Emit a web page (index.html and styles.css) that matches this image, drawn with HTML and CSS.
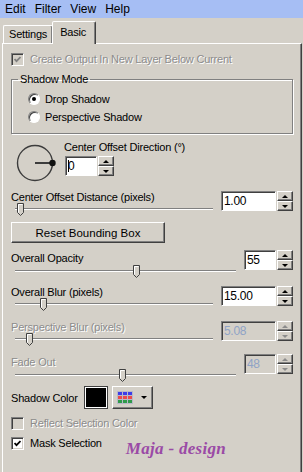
FILE: index.html
```html
<!DOCTYPE html>
<html lang="en">
  <head>
    <meta charset="UTF-8" />
    <meta name="viewport" content="width=device-width, initial-scale=1.0" />
    <link rel="stylesheet" href="styles.css">
    <title>Drop Shadow</title>
  </head>
  <body>
    <div class="menubar">
      <span>Edit</span><span>Filter</span><span>View</span><span>Help</span>
    </div>

    <div class="tabs">
      <div class="tab">Settings</div>
      <div class="tab active">Basic</div>
    </div>

    <div class="panel">
      <div class="check dim">
        <span class="box off-state"><svg width="7" height="7" viewBox="0 0 7 7"><polyline points="0.5,3 2.5,5.2 6.5,1" fill="none" stroke="#808080" stroke-width="1.8"/></svg></span>
        Create Output In New Layer Below Current
      </div>

      <fieldset class="group">
        <legend>Shadow Mode</legend>
        <div class="radio"><span class="dot on"></span>Drop Shadow</div>
        <div class="radio"><span class="dot"></span>Perspective Shadow</div>
      </fieldset>

      <div class="direction">
        <svg class="dial" width="48" height="44" viewBox="0 0 48 44">
          <circle cx="24" cy="22" r="17.5" fill="none" stroke="#3c3c3c" stroke-width="1.4"/>
          <line x1="24" y1="22" x2="41" y2="22" stroke="#3c3c3c" stroke-width="2"/>
          <circle cx="41.5" cy="22" r="3.2" fill="#111"/>
        </svg>
        <div class="dir-fields">
          <div class="label">Center Offset Direction (°)</div>
          <div class="spin narrow">
            <div class="field"><span class="caret"></span>0</div>
            <div class="arrows"><span class="up"></span><span class="down"></span></div>
          </div>
        </div>
      </div>

      <!-- sliders -->
      <div class="slider-block first">
        <div class="label">Center Offset Distance (pixels)</div>
        <div class="spin">
          <div class="field">1.00</div>
          <div class="arrows"><span class="up"></span><span class="down"></span></div>
        </div>
        <div class="slider">
          <div class="track"></div>
          <svg class="thumb" style="left: 2px" width="7" height="13" viewBox="0 0 7 13"><path d="M0.5 9.5V0.5H6.5V9.5L3.5 12.5Z" fill="#d4d0c8" stroke="#404040"/><path d="M1.5 9.5V1.5H5.5" fill="none" stroke="#fff"/></svg>
        </div>
      </div>

      <button class="btn reset">Reset Bounding Box</button>

      <div class="slider-block int">
        <div class="label">Overall Opacity</div>
        <div class="spin narrow">
          <div class="field">55</div>
          <div class="arrows"><span class="up"></span><span class="down"></span></div>
        </div>
        <div class="slider">
          <div class="track"></div>
          <svg class="thumb" style="left: 118px" width="7" height="13" viewBox="0 0 7 13"><path d="M0.5 9.5V0.5H6.5V9.5L3.5 12.5Z" fill="#d4d0c8" stroke="#404040"/><path d="M1.5 9.5V1.5H5.5" fill="none" stroke="#fff"/></svg>
        </div>
      </div>

      <div class="slider-block">
        <div class="label">Overall Blur (pixels)</div>
        <div class="spin">
          <div class="field">15.00</div>
          <div class="arrows"><span class="up"></span><span class="down"></span></div>
        </div>
        <div class="slider">
          <div class="track"></div>
          <svg class="thumb" style="left: 25px" width="7" height="13" viewBox="0 0 7 13"><path d="M0.5 9.5V0.5H6.5V9.5L3.5 12.5Z" fill="#d4d0c8" stroke="#404040"/><path d="M1.5 9.5V1.5H5.5" fill="none" stroke="#fff"/></svg>
        </div>
      </div>

      <div class="slider-block off persp">
        <div class="label dim">Perspective Blur (pixels)</div>
        <div class="spin">
          <div class="field">5.08</div>
          <div class="arrows"><span class="up"></span><span class="down"></span></div>
        </div>
        <div class="slider">
          <div class="track"></div>
          <svg class="thumb" style="left: 11px" width="7" height="13" viewBox="0 0 7 13"><path d="M0.5 9.5V0.5H6.5V9.5L3.5 12.5Z" fill="#d4d0c8" stroke="#404040"/><path d="M1.5 9.5V1.5H5.5" fill="none" stroke="#fff"/></svg>
        </div>
      </div>

      <div class="slider-block int off">
        <div class="label dim">Fade Out</div>
        <div class="spin narrow">
          <div class="field">48</div>
          <div class="arrows"><span class="up"></span><span class="down"></span></div>
        </div>
        <div class="slider">
          <div class="track"></div>
          <svg class="thumb" style="left: 104px" width="7" height="13" viewBox="0 0 7 13"><path d="M0.5 9.5V0.5H6.5V9.5L3.5 12.5Z" fill="#d4d0c8" stroke="#404040"/><path d="M1.5 9.5V1.5H5.5" fill="none" stroke="#fff"/></svg>
        </div>
      </div>

      <div class="color-row">
        <span>Shadow Color</span>
        <span class="swatch"></span>
        <button class="btn palette">
          <svg width="16" height="13" viewBox="0 0 16 13">
            <rect x="0" y="0" width="16" height="13" fill="#b8b8c8"/>
            <rect x="1" y="1" width="4" height="3" fill="#3d3de8"/>
            <rect x="6" y="1" width="4" height="3" fill="#3d3de8"/>
            <rect x="11" y="1" width="4" height="3" fill="#3d3de8"/>
            <rect x="1" y="5" width="4" height="3" fill="#ec4b4b"/>
            <rect x="6" y="5" width="4" height="3" fill="#ec4b4b"/>
            <rect x="11" y="5" width="4" height="3" fill="#ec4b4b"/>
            <rect x="1" y="9" width="4" height="3" fill="#2f9a4a"/>
            <rect x="6" y="9" width="4" height="3" fill="#2f9a4a"/>
            <rect x="11" y="9" width="4" height="3" fill="#2f9a4a"/>
          </svg>
          <span class="drop"></span>
        </button>
      </div>

      <div class="check dim reflect">
        <span class="box off-state"></span>
        Reflect Selection Color
      </div>

      <div class="check mask">
        <span class="box"><svg width="7" height="7" viewBox="0 0 7 7"><polyline points="0.5,3 2.5,5.2 6.5,1" fill="none" stroke="#000" stroke-width="1.8"/></svg></span>
        Mask Selection
        <span class="sign">Maja - design</span>
      </div>
    </div>
  </body>
</html>
```

FILE: styles.css
```css
body {
  margin: 0;
  background: #d4d0c8;
  font-family: 'Liberation Sans', Arial, sans-serif;
  font-size: 11px;
  letter-spacing: -0.2px;
  color: #000;
  overflow: hidden;
}

.menubar {
  height: 18px;
  background: #a6bef4;
  display: flex;
  align-items: center;
  gap: 9px;
  padding-left: 5px;
  font-size: 12px;
  letter-spacing: 0;
}

.tabs {
  display: flex;
  align-items: flex-end;
  height: 25px;
  padding-left: 3px;
}
.tab {
  height: 17px;
  line-height: 17px;
  padding: 0 5px;
  border: 1px solid;
  border-bottom: 0;
  border-color: #fff #404040 transparent #fff;
  border-radius: 2px 2px 0 0;
  box-shadow: inset -1px 0 #808080;
}
.tab.active {
  height: 22px;
  line-height: 20px;
  margin-left: -1px;
  margin-bottom: -1px;
  padding: 0 9px 0 7px;
  position: relative;
  z-index: 1;
  background: #d4d0c8;
}

.panel {
  margin: 0 1px 0 2px;
  border-top: 1px solid #fff;
  border-left: 1px solid #fff;
  border-right: 1px solid #404040;
  box-shadow: inset -1px 0 #808080;
  padding: 9px 8px 0 8px;
  height: calc(100vh - 43px);
  box-sizing: border-box;
}

.label {
  line-height: 13px;
  height: 13px;
  white-space: nowrap;
}
.dim {
  color: #8c8c8c;
  text-shadow: 1px 1px 0 #fff;
}

/* checkboxes */
.check {
  display: flex;
  align-items: center;
  gap: 6px;
  height: 13px;
  line-height: 13px;
}
.box {
  width: 13px;
  height: 13px;
  box-sizing: border-box;
  border: 1px solid;
  border-color: #808080 #fff #fff #808080;
  box-shadow: inset 1px 1px #404040, inset -1px -1px #d4d0c8;
  background: #fff;
  display: flex;
  align-items: center;
  justify-content: center;
  flex-shrink: 0;
}
.box.off-state {
  background: #d4d0c8;
}
.reflect {
  margin-top: 8px;
}
.mask {
  margin-top: 7px;
}
.sign {
  margin-left: 18px;
  margin-top: 9px;
  font-family: 'Liberation Serif', serif;
  font-style: italic;
  font-weight: bold;
  font-size: 17px;
  letter-spacing: 0.3px;
  color: #9a4aa6;
}

/* shadow mode group */
.group {
  margin: 7px 0 0 0;
  padding: 7px 0 10px 6px;
  border: 1px solid #808080;
  box-shadow: inset 1px 1px #fff, 1px 1px #fff;
}
.group legend {
  padding: 0 2px;
  line-height: 13px;
}
.radio {
  display: flex;
  align-items: center;
  gap: 5px;
  height: 12px;
  margin-left: 10px;
}
.radio + .radio {
  margin-top: 6px;
}
.dot {
  width: 12px;
  height: 12px;
  box-sizing: border-box;
  border-radius: 50%;
  border: 1px solid;
  border-color: #808080 #fff #fff #808080;
  box-shadow: inset 1px 1px #404040;
  background: #fff;
  display: flex;
  align-items: center;
  justify-content: center;
}
.dot.on::after {
  content: '';
  width: 4px;
  height: 4px;
  border-radius: 50%;
  background: #000;
}

/* direction */
.direction {
  display: flex;
  margin-top: 7px;
  height: 44px;
}
.dir-fields {
  margin-left: 5px;
}
.dir-fields .spin {
  margin: 2px 0 0 1px;
}

/* spin boxes */
.spin {
  display: flex;
  gap: 1px;
  height: 20px;
}
.field {
  width: 55px;
  box-sizing: border-box;
  border: 1px solid;
  border-color: #808080 #fff #fff #808080;
  box-shadow: inset 1px 1px #404040;
  background: #fff;
  padding: 2px 0 0 2px;
  line-height: 15px;
  font-size: 12px;
  letter-spacing: -0.3px;
}
.spin.narrow .field {
  width: 32px;
}
.caret {
  display: inline-block;
  width: 1px;
  height: 12px;
  background: #000;
  vertical-align: -2px;
  margin-right: -1px;
}
.arrows {
  display: flex;
  flex-direction: column;
  width: 16px;
}
.arrows span {
  flex: 1;
  border: 1px solid;
  border-color: #fff #404040 #404040 #fff;
  box-shadow: inset -1px -1px #808080;
  display: flex;
  align-items: center;
  justify-content: center;
}
.arrows .up::after,
.arrows .down::after {
  content: '';
  border: 3px solid transparent;
}
.arrows .up::after {
  border-top-width: 0;
  border-bottom-color: #000;
}
.arrows .down::after {
  border-bottom-width: 0;
  border-top-color: #000;
}
.off .field {
  background: #d4d0c8;
  color: #8fa3c6;
}
.off .arrows .up::after {
  border-bottom-color: #8c8c8c;
}
.off .arrows .down::after {
  border-top-color: #8c8c8c;
}

/* slider rows */
.slider-block {
  display: grid;
  grid-template-columns: 1fr auto;
  column-gap: 4px;
  margin-top: 7px;
}
.slider-block.first {
  margin-top: 6px;
}
.slider-block.persp {
  margin-top: 9px;
}
.slider-block .label {
  grid-column: 1;
  grid-row: 1;
}
.slider-block .spin {
  grid-column: 2;
  grid-row: 1 / span 2;
}
.slider {
  grid-column: 1;
  grid-row: 2;
  position: relative;
  height: 14px;
  margin: -1px 4px 0 4px;
  padding-top: 5px;
  box-sizing: border-box;
}
.slider-block.int .label {
  margin-top: 2px;
}
.slider-block.int .slider {
  margin-top: 0;
}
.track {
  border-top: 1px solid #808080;
  border-bottom: 1px solid #fff;
}
.thumb {
  position: absolute;
  top: 0;
}

/* buttons */
.btn {
  font: inherit;
  color: #000;
  background: #d4d0c8;
  border: 1px solid;
  border-color: #fff #404040 #404040 #fff;
  box-shadow: inset -1px -1px #808080;
  padding: 0;
  margin: 0;
}
.reset {
  display: block;
  width: 154px;
  height: 21px;
  margin-top: 5px;
  font-size: 11.5px;
}

.color-row {
  display: flex;
  align-items: center;
  height: 23px;
  margin-top: 3px;
}
.swatch {
  width: 24px;
  height: 23px;
  box-sizing: border-box;
  margin-left: 6px;
  border: 1px solid #404040;
  box-shadow: inset 0 0 0 1px #fff;
  background: #000;
}
.palette {
  width: 41px;
  height: 23px;
  margin-left: 4px;
  display: flex;
  align-items: center;
  padding-left: 4px;
}
.drop {
  margin-left: 8px;
  border: 3px solid transparent;
  border-bottom-width: 0;
  border-top-color: #000;
  border-left-width: 3px;
  border-right-width: 3px;
}
```
